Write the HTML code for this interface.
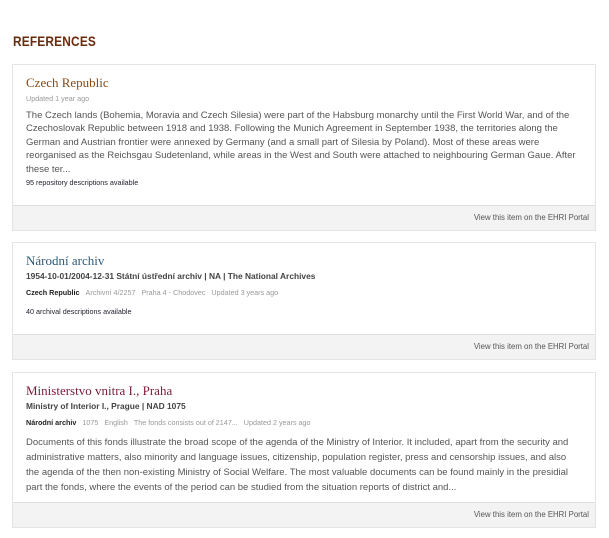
<!DOCTYPE html>
<html><head><meta charset="utf-8"><style>
body{margin:0;width:609px;height:538px;background:#fff;font-family:"Liberation Sans",sans-serif;position:relative;overflow:hidden}
.a{position:absolute;white-space:nowrap}
h2{position:absolute;left:13px;top:33px;margin:0;font-size:14px;font-weight:bold;color:#6a2c0c;letter-spacing:0.2px;transform:scaleX(0.85);transform-origin:left}
.card{position:absolute;left:12px;width:582px;border:1px solid #e4e4e4;background:#fff}
.foot{position:absolute;left:0;right:0;bottom:0;height:24px;background:#f3f3f3;border-top:1px solid #ddd}
.foot span{position:absolute;right:6px;top:7px;font-size:7.8px;color:#555}
.t{font-family:"Liberation Serif",serif;font-size:13px}
.g{font-size:7.2px;color:#999}
.g i{font-style:normal;margin-left:6px}
.body{font-size:9.5px;color:#555;line-height:14px;white-space:normal;width:560px}
.sub{font-size:8.4px;font-weight:bold;color:#444}
.lnk{font-size:7.2px;color:#223}
</style></head><body>
<h2>REFERENCES</h2>

<div class="card" style="top:64px;height:165px">
<div class="foot"><span>View this item on the EHRI Portal</span></div>
</div>
<div class="a t" style="left:26px;top:75px;color:#8a4a14">Czech Republic</div>
<div class="a g" style="left:26px;top:94px">Updated 1 year ago</div>
<div class="a body" style="left:26px;top:109px;line-height:13.4px">The Czech lands (Bohemia, Moravia and Czech Silesia) were part of the Habsburg monarchy until the First World War, and of the Czechoslovak Republic between 1918 and 1938. Following the Munich Agreement in September 1938, the territories along the German and Austrian frontier were annexed by Germany (and a small part of Silesia by Poland). Most of these areas were reorganised as the Reichsgau Sudetenland, while areas in the West and South were attached to neighbouring German Gaue. After these ter...</div>
<div class="a lnk" style="left:26px;top:178px">95 repository descriptions available</div>

<div class="card" style="top:242px;height:116px">
<div class="foot"><span>View this item on the EHRI Portal</span></div>
</div>
<div class="a t" style="left:26px;top:253px;color:#2d5a78">Národní archiv</div>
<div class="a sub" style="left:26px;top:271px">1954-10-01/2004-12-31 Státní ústřední archiv | NA | The National Archives</div>
<div class="a g" style="left:26px;top:288px"><b style="color:#222">Czech Republic</b><i>Archivní 4/2257</i><i>Praha 4 - Chodovec</i><i>Updated 3 years ago</i></div>
<div class="a lnk" style="left:26px;top:307px">40 archival descriptions available</div>

<div class="card" style="top:372px;height:154px">
<div class="foot"><span>View this item on the EHRI Portal</span></div>
</div>
<div class="a t" style="left:26px;top:383px;color:#7a1a3a">Ministerstvo vnitra I., Praha</div>
<div class="a sub" style="left:26px;top:401px">Ministry of Interior I., Prague | NAD 1075</div>
<div class="a g" style="left:26px;top:418px"><b style="color:#222">Národní archiv</b><i>1075</i><i>English</i><i>The fonds consists out of 2147...</i><i>Updated 2 years ago</i></div>
<div class="a body" style="left:26px;top:435px;line-height:15px;width:552px">Documents of this fonds illustrate the broad scope of the agenda of the Ministry of Interior. It included, apart from the security and administrative matters, also minority and language issues, citizenship, population register, press and censorship issues, and also the agenda of the then non-existing Ministry of Social Welfare. The most valuable documents can be found mainly in the presidial part the fonds, where the events of the period can be studied from the situation reports of district and...</div>
</body></html>
